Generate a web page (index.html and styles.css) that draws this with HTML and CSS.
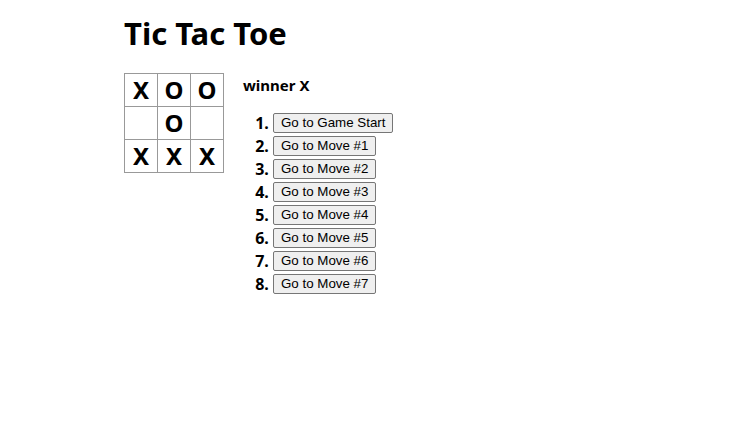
FILE: index.html
```html
<!DOCTYPE html>
<html>
<head>
<meta charset="utf-8">
<link rel="stylesheet" href="styles.css">
</head>
<body>
<div class="page">
  <h1 class="title">Tic Tac Toe</h1>
  <div class="game">
    <div class="board">
      <div class="row">
        <button class="square">X</button><button class="square">O</button><button class="square">O</button>
      </div>
      <div class="row">
        <button class="square"></button><button class="square">O</button><button class="square"></button>
      </div>
      <div class="row">
        <button class="square">X</button><button class="square">X</button><button class="square">X</button>
      </div>
    </div>
    <div class="info">
      <div class="status">winner X</div>
      <ol class="moves">
        <li><button class="move">Go to Game Start</button></li>
        <li><button class="move">Go to Move #1</button></li>
        <li><button class="move">Go to Move #2</button></li>
        <li><button class="move">Go to Move #3</button></li>
        <li><button class="move">Go to Move #4</button></li>
        <li><button class="move">Go to Move #5</button></li>
        <li><button class="move">Go to Move #6</button></li>
        <li><button class="move">Go to Move #7</button></li>
      </ol>
    </div>
  </div>
</div>
</body>
</html>
```

FILE: styles.css
```css
html, body {
  margin: 0;
  padding: 0;
  background: #fff;
}
.page {
  padding: 0 0 0 124px;
  font-family: "Noto Sans", "Open Sans", sans-serif;
  color: #000;
}
.title {
  margin: 0;
  padding-top: 12px;
  font-size: 31px;
  font-weight: 700;
  line-height: 42px;
}
.game {
  display: flex;
  flex-direction: row;
  margin-top: 19px;
}
.board {
  display: flex;
  flex-direction: column;
}
.row {
  display: flex;
}
.square {
  width: 34px;
  height: 34px;
  margin: -1px -1px 0 0;
  padding: 0;
  border: 1px solid #999;
  background: #fff;
  font-family: "Noto Sans", sans-serif;
  font-size: 24px;
  font-weight: 700;
  line-height: 32px;
  color: #000;
  text-align: center;
}
.row:first-child .square {
  margin-top: 0;
}
.info {
  margin-left: 20px;
}
.status {
  font-size: 15px;
  font-weight: 700;
  line-height: 22px;
  margin-top: 1px;
}
.moves {
  margin: 16px 0 0 0;
  padding-left: 30px;
  font-size: 16px;
  font-weight: 700;
}
.moves li {
  height: 23px;
  line-height: 23px;
}
.move {
  font-family: "Liberation Sans", Arial, sans-serif;
  font-size: 13.33px;
  font-weight: 400;
  color: #000;
  background: #efefef;
  border: 1px solid #767676;
  border-radius: 2px;
  padding: 1px 7px;
  height: 20px;
  line-height: 16px;
  vertical-align: top;
  margin-top: 1px;
}
```
